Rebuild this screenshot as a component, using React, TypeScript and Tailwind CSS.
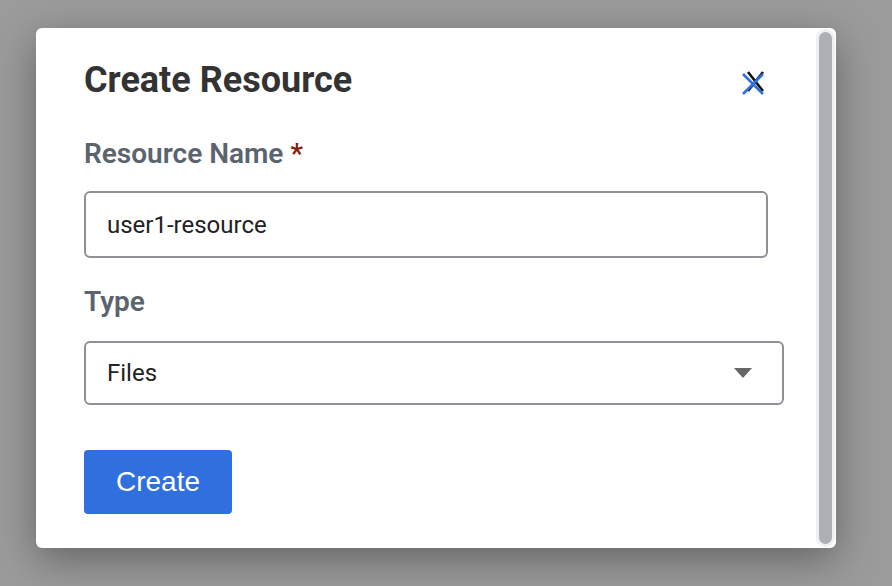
import React, { useState } from 'react'

const CloseIcon = () => (
  <svg width="26" height="26" viewBox="0 0 26 26" fill="none">
    <path d="M8 2 L23 21 M23 2 L8 21" stroke="#111" strokeWidth="2.6" />
    <path d="M3 4 L23 24 M23 4 L3 24" stroke="#2f6fde" strokeWidth="2.6" />
  </svg>
)

export default function App() {
  const [name, setName] = useState('user1-resource')

  return (
    <div className="w-full h-[586px] bg-[#9b9b9b] pt-[28px] pl-[36px] overflow-hidden">
      <div className="w-[800px] h-[520px] bg-white rounded-[6px] shadow-[0_12px_40px_rgba(0,0,0,0.35)] flex">
        <div className="flex-1 pl-[48px] pr-[32px] pt-[32px] font-['Roboto',sans-serif]">
          <div className="flex items-center justify-between h-[40px]">
            <h1 className="text-[36px] leading-[40px] font-bold text-[#333333]">Create Resource</h1>
            <button className="mr-[18px] mt-[6px]">
              <CloseIcon />
            </button>
          </div>

          <label className="block mt-[38px] text-[28px] leading-[32px] font-semibold text-[#5a646e]">
            Resource Name <span className="text-[#8b1a10]">*</span>
          </label>
          <input
            value={name}
            onChange={(e) => setName(e.target.value)}
            className="mt-[21px] w-[684px] h-[67px] border-2 border-[#8e9196] rounded-[6px] px-[21px] text-[24px] text-[#222] outline-none"
          />

          <label className="block mt-[28px] text-[28px] leading-[32px] font-semibold text-[#5a646e]">
            Type
          </label>
          <div className="mt-[23px] w-[700px] h-[64px] border-2 border-[#8e9196] rounded-[6px] px-[21px] flex items-center justify-between">
            <span className="text-[24px] text-[#222]">Files</span>
            <svg width="18" height="10" viewBox="0 0 18 10" className="mr-[9px]">
              <path d="M0 0 H18 L9 10 Z" fill="#666" />
            </svg>
          </div>

          <button className="mt-[45px] w-[148px] h-[64px] bg-[#2f6fde] rounded-[4px] text-white text-[28px] font-['Liberation_Sans',Arial,sans-serif]">
            Create
          </button>
        </div>

        <div className="w-[20px] py-[1px] pr-[1px]">
          <div className="h-full bg-[#eef0f2] rounded-full p-[3px]">
            <div className="h-full bg-[#adb0b7] rounded-full" />
          </div>
        </div>
      </div>
    </div>
  )
}
